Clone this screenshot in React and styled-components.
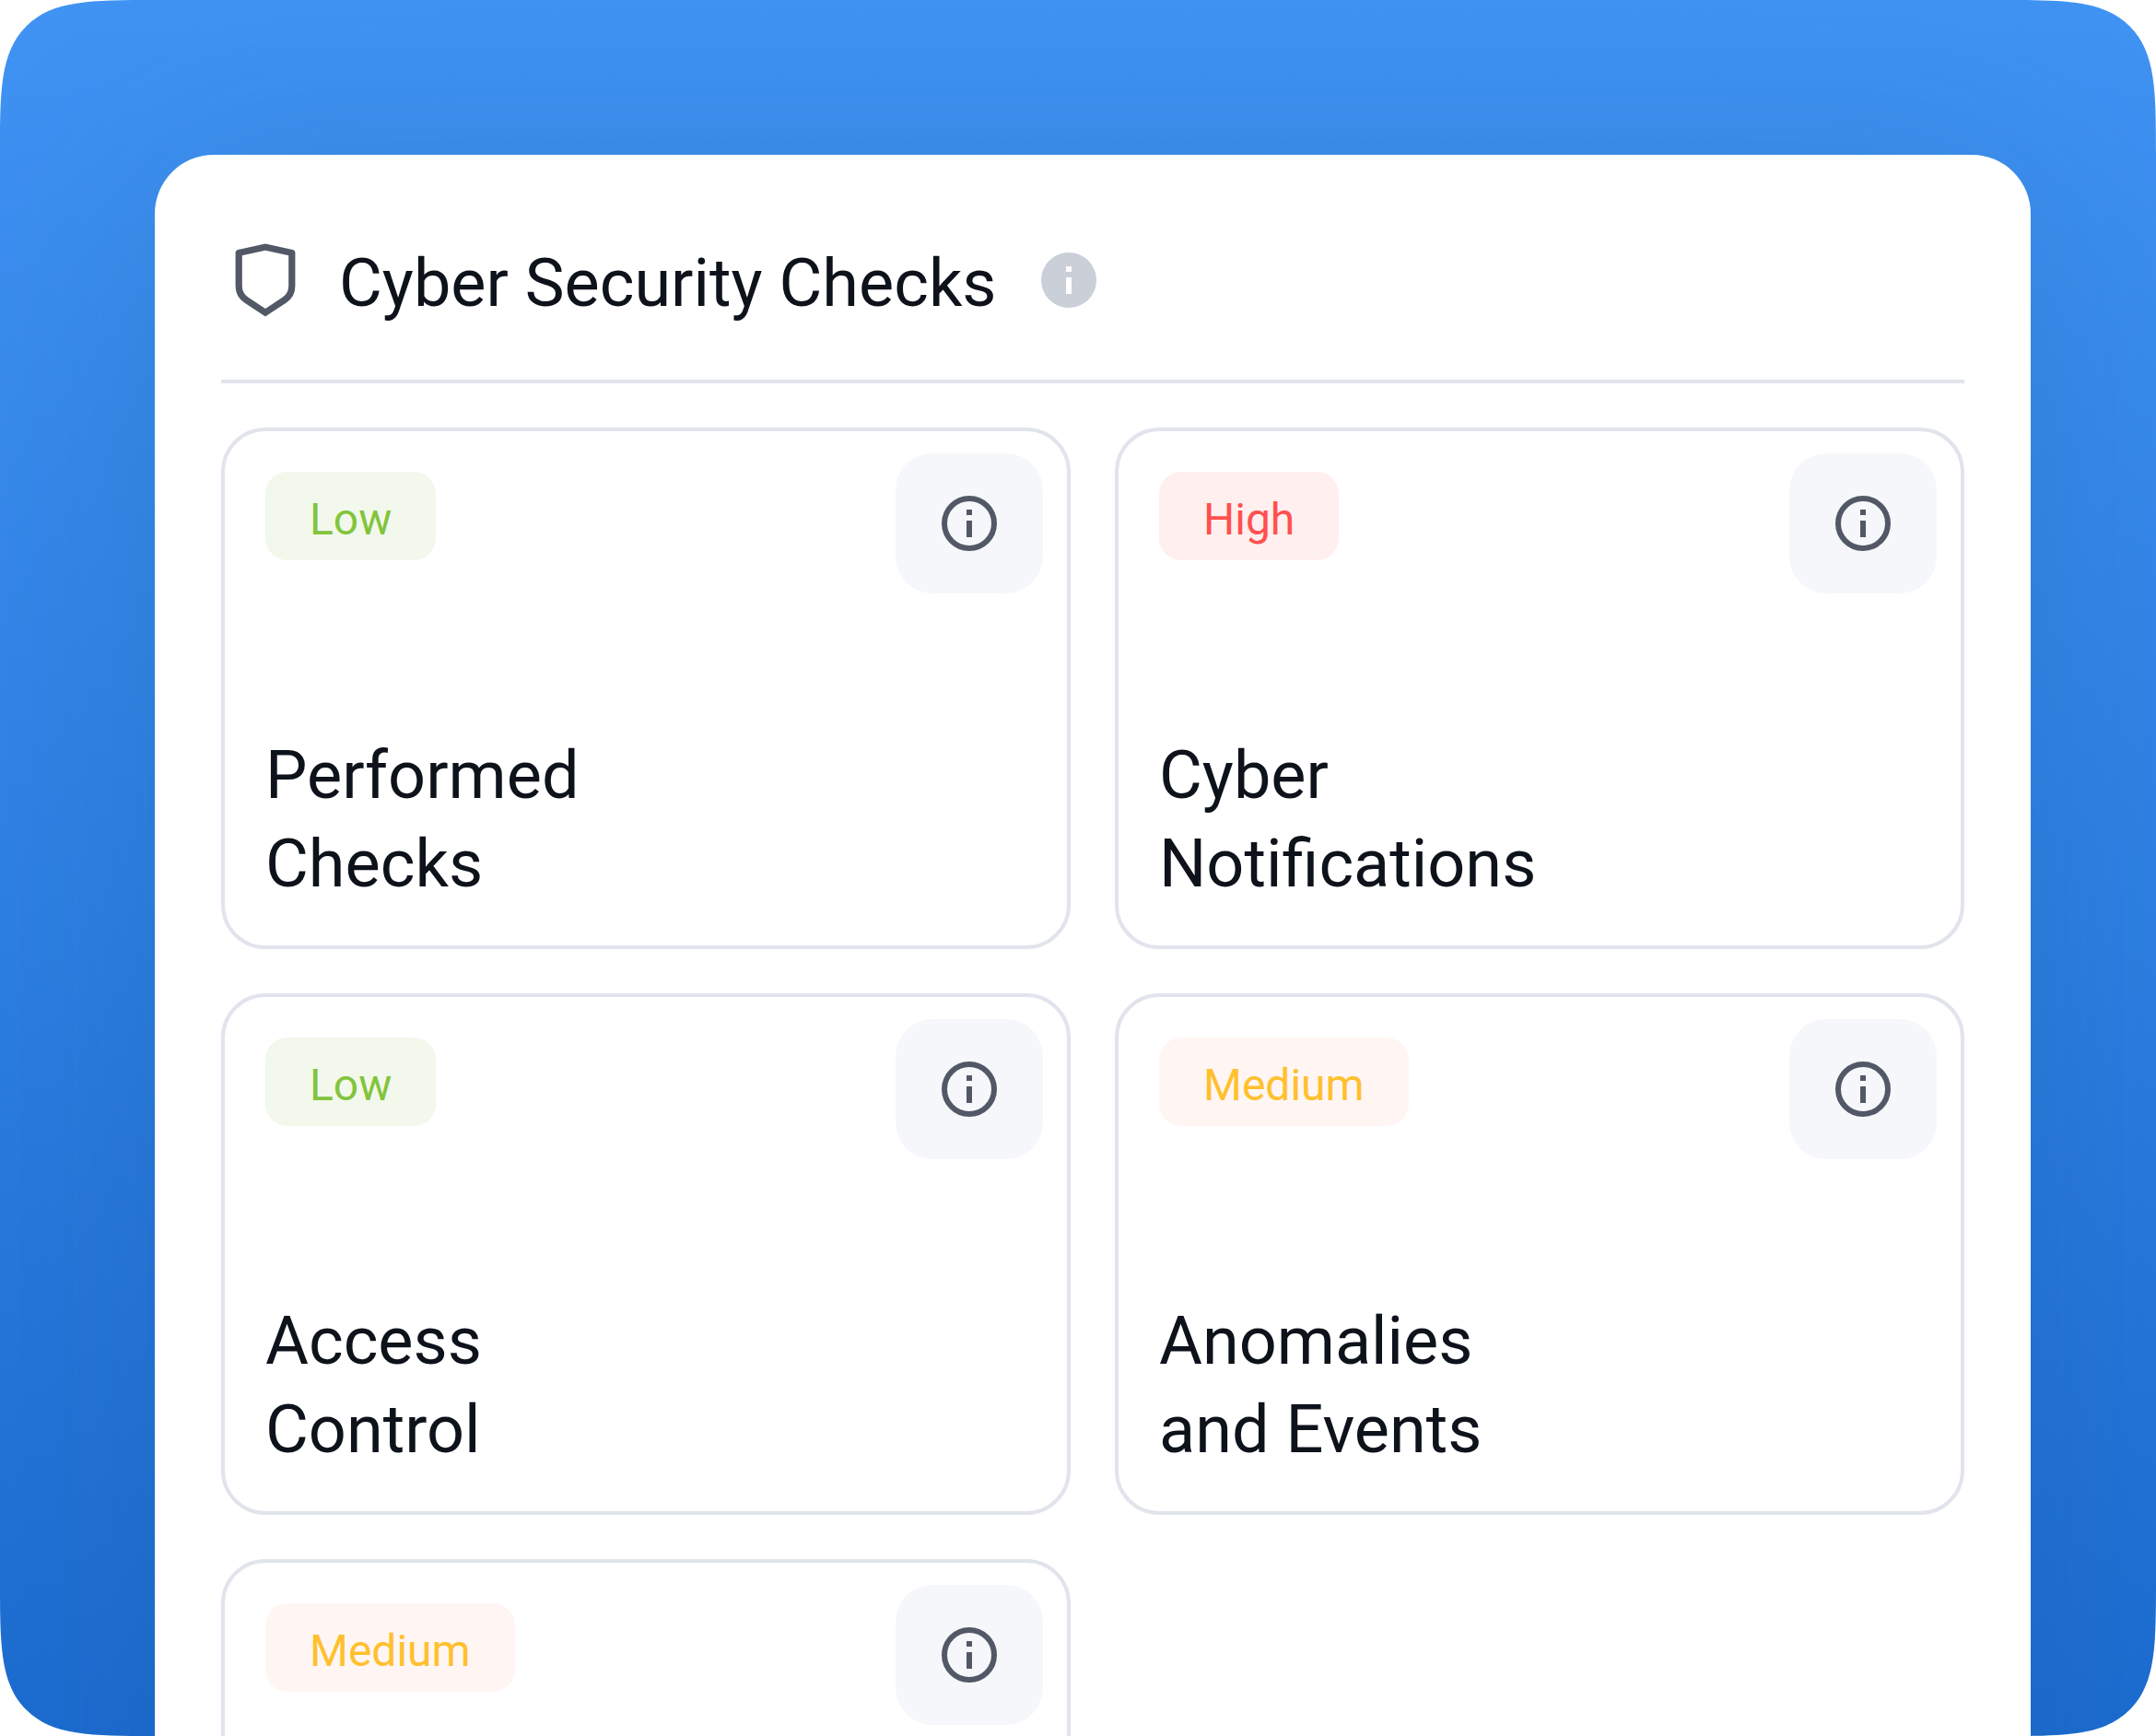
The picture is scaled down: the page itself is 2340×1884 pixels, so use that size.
import React from "react";
import styled, { createGlobalStyle } from "styled-components";

const GlobalStyle = createGlobalStyle`
  * {
    box-sizing: border-box;
  }

  body {
    margin: 0;
    background-color: #ffffff;
    color: #0d121b;
    font-family: Roboto, "Liberation Sans", sans-serif;
  }
`;

const Stage = styled.main`
  height: 100vh;
  padding: 168px 136px 0 168px;
  overflow: hidden;
  border-radius: 168px;
  corner-shape: superellipse(1.9);
  background: linear-gradient(180deg, #4093f3 0%, #2d7fe2 53%, #1c6cd0 100%);
`;

const Panel = styled.section`
  min-height: 100%;
  padding: 88px 72px 48px;
  border-radius: 64px 64px 0 0;
  background-color: #ffffff;
  box-shadow: 0 24px 240px rgba(20, 70, 120, 0.18);
`;

const Header = styled.header`
  display: flex;
  align-items: center;
  gap: 32px;
  padding-bottom: 60px;
  border-bottom: 4px solid #e1e4ec;
`;

const Title = styled.h1`
  margin: 0 10px 0 0;
  padding-top: 8px;
  font-size: 72px;
  font-weight: 400;
  line-height: 88px;
`;

const Grid = styled.div`
  display: grid;
  grid-template-columns: 1fr 1fr;
  gap: 48px;
  margin-top: 48px;
`;

const Card = styled.article`
  display: flex;
  flex-direction: column;
  justify-content: space-between;
  min-height: 566px;
  padding: 24px 26px 40px 44px;
  border: 4px solid #e1e4ec;
  border-radius: 48px;
`;

const CardTop = styled.div`
  display: flex;
  align-items: flex-start;
  justify-content: space-between;
`;

const levels = {
  Low: { color: "#82c43c", background: "#f2f8eb" },
  Medium: { color: "#ffc02e", background: "#fff6f3" },
  High: { color: "#ff5050", background: "#ffefee" },
};

const Badge = styled.span`
  margin-top: 20px;
  padding: 20px 48px 12px;
  border-radius: 24px;
  background-color: ${({ $level }) => levels[$level].background};
  color: ${({ $level }) => levels[$level].color};
  font-size: 48px;
  line-height: 64px;
`;

const InfoButton = styled.button`
  display: flex;
  align-items: center;
  justify-content: center;
  width: 160px;
  height: 152px;
  padding: 0;
  border: 0;
  border-radius: 40px;
  background-color: #f5f7fb;
  color: #525866;
  cursor: pointer;
`;

const CardTitle = styled.h2`
  margin: 0;
  font-size: 72px;
  font-weight: 400;
  line-height: 96px;
  white-space: pre-line;
`;

const ShieldIcon = () => (
  <svg
    width='96'
    height='96'
    viewBox='-1.33 -1.33 26.66 26.66'
    fill='#525866'
    aria-hidden='true'
  >
    <path d='M3.783 2.826L12 1l8.217 1.826a1 1 0 0 1 .783.976v9.987a6 6 0 0 1-2.672 4.992L12 23l-6.328-4.219A6 6 0 0 1 3 13.79V3.802a1 1 0 0 1 .783-.976zM5 4.604v9.185a4 4 0 0 0 1.781 3.328L12 20.597l5.219-3.48A4 4 0 0 0 19 13.79V4.604L12 3.05 5 4.604z' />
  </svg>
);

const InfoFilledIcon = () => (
  <svg width='72' height='72' viewBox='0 0 72 72' aria-hidden='true'>
    <circle cx='36' cy='36' r='30' fill='#cacfd8' />
    <path d='M33 21h6v6h-6zM33 33h6v18h-6z' fill='#ffffff' />
  </svg>
);

const InfoIcon = () => (
  <svg width='72' height='72' viewBox='0 0 72 72' fill='none' aria-hidden='true'>
    <circle cx='36' cy='36' r='27' stroke='currentColor' strokeWidth='6' />
    <path d='M33 21h6v6h-6zM33 33h6v18h-6z' fill='currentColor' />
  </svg>
);

const checks = [
  { id: 1, level: "Low", title: "Performed\nChecks" },
  { id: 2, level: "High", title: "Cyber\nNotifications" },
  { id: 3, level: "Low", title: "Access\nControl" },
  { id: 4, level: "Medium", title: "Anomalies\nand Events" },
  { id: 5, level: "Medium" },
];

const CheckCard = ({ level, title }) => {
  return (
    <Card>
      <CardTop>
        <Badge $level={level}>{level}</Badge>
        <InfoButton type='button' aria-label='Info'>
          <InfoIcon />
        </InfoButton>
      </CardTop>
      {title && <CardTitle>{title}</CardTitle>}
    </Card>
  );
};

const App = () => {
  return (
    <>
      <GlobalStyle />
      <Stage>
        <Panel>
          <Header>
            <ShieldIcon />
            <Title>Cyber Security Checks</Title>
            <InfoFilledIcon />
          </Header>
          <Grid>
            {checks.map((check) => (
              <CheckCard
                key={check.id}
                level={check.level}
                title={check.title}
              />
            ))}
          </Grid>
        </Panel>
      </Stage>
    </>
  );
};

export default App;
